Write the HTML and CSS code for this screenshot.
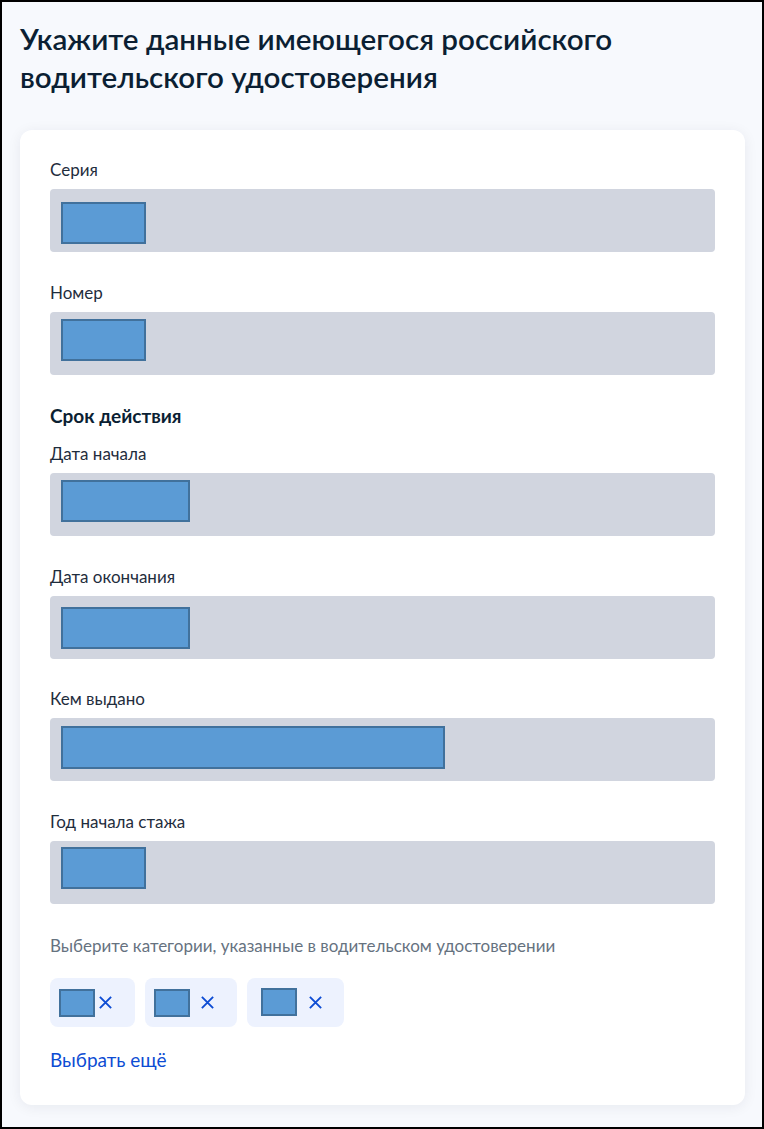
FILE: index.html
```html
<!DOCTYPE html>
<html lang="ru">
<head>
<meta charset="utf-8">
<title>Водительское удостоверение</title>
<link rel="stylesheet" href="styles.css">
</head>
<body>
<div class="frame">
  <h1 class="title">Укажите данные имеющегося российского водительского удостоверения</h1>
  <div class="card">
    <div class="field">
      <div class="label">Серия</div>
      <div class="input"><span class="ph ph-s t13"></span></div>
    </div>
    <div class="field">
      <div class="label">Номер</div>
      <div class="input"><span class="ph ph-s t7"></span></div>
    </div>
    <div class="section">Срок действия</div>
    <div class="field">
      <div class="label">Дата начала</div>
      <div class="input"><span class="ph ph-m t7"></span></div>
    </div>
    <div class="field">
      <div class="label">Дата окончания</div>
      <div class="input"><span class="ph ph-m t11"></span></div>
    </div>
    <div class="field">
      <div class="label">Кем выдано</div>
      <div class="input"><span class="ph ph-l t8"></span></div>
    </div>
    <div class="field">
      <div class="label">Год начала стажа</div>
      <div class="input"><span class="ph ph-s t6"></span></div>
    </div>
    <div class="hint">Выберите категории, указанные в водительском удостоверении</div>
    <div class="chips">
      <div class="chip chip-a"><span class="chip-ph"></span><svg class="x" viewBox="0 0 16 16"><path d="M2 2 L14 14 M14 2 L2 14"/></svg></div>
      <div class="chip"><span class="chip-ph"></span><svg class="x" viewBox="0 0 16 16"><path d="M2 2 L14 14 M14 2 L2 14"/></svg></div>
      <div class="chip chip-c"><span class="chip-ph up"></span><svg class="x" viewBox="0 0 16 16"><path d="M2 2 L14 14 M14 2 L2 14"/></svg></div>
    </div>
    <a class="more" href="#">Выбрать ещё</a>
  </div>
</div>
</body>
</html>
```

FILE: styles.css
```css
* { box-sizing: border-box; }
html, body { margin: 0; padding: 0; background: #000; }
body { font-family: Lato, "Noto Sans", sans-serif; color: #0b1f33; }

.frame {
  width: 764px;
  height: 1129px;
  border: 2px solid #000;
  background: #f7f9fd;
  padding: 18px 17px 0 18px;
  overflow: hidden;
}

.title {
  margin: 0 0 34px 0;
  font-size: 29.6px;
  line-height: 38px;
  font-weight: 600;
  color: #0b1f33;
  max-width: 660px;
}

.card {
  background: #fff;
  border-radius: 12px;
  box-shadow: 0 2px 14px rgba(11, 31, 51, 0.07);
  padding: 30px 30px 33px 30px;
  display: flex;
  flex-direction: column;
}

.field { margin-bottom: 30.5px; }
.label {
  font-size: 17px;
  line-height: 20px;
  margin-bottom: 9px;
  color: #1f2d3d;
}
.input {
  height: 63px;
  background: #d1d5df;
  border-radius: 4px;
  padding-left: 11px;
  display: flex;
  align-items: flex-start;
}
.ph {
  display: block;
  background: #5b9bd5;
  border: 2px solid #41719c;
}
.ph-s { width: 85px; height: 42px; }
.ph-m { width: 129px; height: 42px; }
.ph-l { width: 384px; height: 43px; }
.t13 { margin-top: 13px; }
.t11 { margin-top: 11px; }
.t8 { margin-top: 8px; }
.t7 { margin-top: 7px; }
.t6 { margin-top: 6px; }

.section {
  font-size: 19px;
  line-height: 20px;
  font-weight: 700;
  margin-top: 1px;
  margin-bottom: 18px;
}

.hint {
  font-size: 17px;
  line-height: 20px;
  color: #66727f;
  margin-top: 2px;
  margin-bottom: 22px;
}

.chips { display: flex; gap: 10px; margin-bottom: 21px; }
.chip {
  height: 49px;
  background: #edf2fe;
  border-radius: 8px;
  display: flex;
  align-items: center;
  gap: 10px;
  padding: 0 22px 0 9px;
}
.chip-a { gap: 3px; }
.chip-c { padding: 0 21px 0 14px; gap: 11px; }
.chip-ph {
  display: block;
  width: 36px;
  height: 28px;
  background: #5b9bd5;
  border: 2px solid #41719c;
}
.chip-ph.up { margin-top: -2px; }
.x {
  width: 15px;
  height: 15px;
  fill: none;
  stroke: #0d4cd3;
  stroke-width: 2;
}

.more {
  align-self: flex-start;
  font-size: 19px;
  line-height: 24px;
  color: #0d4cd3;
  text-decoration: none;
}
```
